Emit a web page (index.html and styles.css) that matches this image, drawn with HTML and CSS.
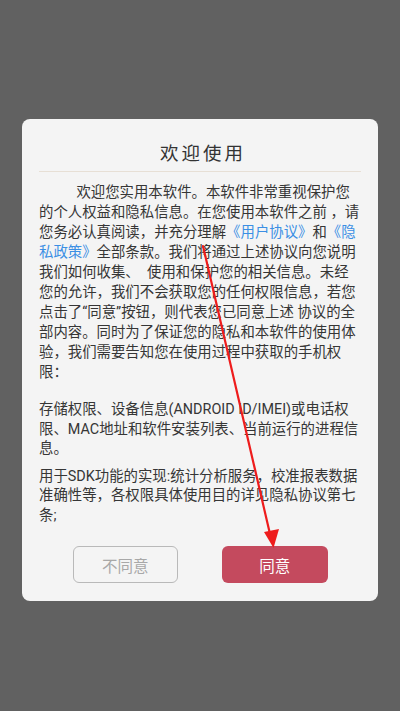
FILE: index.html
```html
<!DOCTYPE html>
<html lang="zh-CN">
<head>
<meta charset="utf-8">
<title>欢迎使用</title>
<link rel="stylesheet" href="styles.css">
</head>
<body>
<div class="page">
  <div class="dialog">
    <h1 class="title">欢迎使用</h1>
    <div class="divider"></div>
    <div class="content">
      <p class="para first">欢迎您实用本软件。本软件非常重视保护您的个人权益和隐私信息。在您使用本软件之前 ，请您务必认真阅读，并充分理解<a class="link">《用户协议》</a>和<a class="link">《隐</a><a class="link">私政策》</a>全部条款。我们将通过上述协议向您说明我们如何收集、&ensp;使用和保护您的相关信息。未经您的允许，我们不会获取您的任何权限信息，若您点击了“同意”按钮，则代表您已同意上述 协议的全部内容。同时为了保证您的隐私和本软件的使用体验，我们需要告知您在使用过程中获取的手机权限：</p>
      <p class="para second">存储权限、设备信息(ANDROID ID/IMEI)或电话权限、MAC地址和软件安装列表、当前运行的进程信息。</p>
      <p class="para third">用于SDK功能的实现:统计分析服务，校准报表数据准确性等，各权限具体使用目的详见隐私协议第七条;</p>
    </div>
    <div class="actions">
      <button class="btn btn-disagree">不同意</button>
      <button class="btn btn-agree">同意</button>
    </div>
  </div>
  <svg class="arrow" width="400" height="711" viewBox="0 0 400 711">
    <line x1="203" y1="246" x2="270" y2="534" stroke="#ee1c1c" stroke-width="2.2" stroke-linecap="round"/>
    <polygon points="273.5,548 264,532 279,529" fill="#ee1c1c"/>
  </svg>
</div>
</body>
</html>
```

FILE: styles.css
```css
html, body {
  margin: 0;
  padding: 0;
}

body {
  background: #616161;
  font-family: "Roboto", "Noto Sans CJK SC", sans-serif;
}

.page {
  position: relative;
  width: 400px;
  min-height: 711px;
  padding-top: 119px;
  box-sizing: border-box;
}

.dialog {
  width: 356px;
  margin: 0 auto;
  background: #f4f4f4;
  border-radius: 8px;
  padding: 0 17px 18px;
  box-sizing: border-box;
}

.title {
  margin: 0;
  padding-top: 25px;
  padding-left: 6px;
  font-size: 18.5px;
  line-height: 20px;
  font-weight: normal;
  letter-spacing: 3px;
  text-align: center;
  color: #333333;
}

.divider {
  height: 1px;
  background: #e7dfd5;
  margin-top: 7px;
}

.content {
  margin-top: 11px;
  color: #363636;
  font-size: 14.4px;
  line-height: 20px;
}

.para {
  margin: 0;
}

.first {
  text-indent: 37.4px;
}

.second {
  margin-top: 17px;
  line-height: 19.5px;
}

.third {
  margin-top: 8px;
  line-height: 19.8px;
}

.link {
  color: #3b8fe4;
  text-decoration: none;
}

.actions {
  display: flex;
  justify-content: center;
  gap: 44px;
  margin-top: 20px;
}

.btn {
  width: 105.5px;
  height: 37.5px;
  border-radius: 6px;
  font-family: "Roboto", "Noto Sans CJK SC", sans-serif;
  font-size: 15.5px;
  padding: 0;
  box-sizing: border-box;
}

.btn-disagree {
  background: transparent;
  border: 1.2px solid #b9b9b9;
  color: #a8a8a8;
}

.btn-agree {
  background: #c44a5e;
  border: none;
  color: #ffffff;
}

.arrow {
  position: absolute;
  top: 0;
  left: 0;
  pointer-events: none;
}
```
